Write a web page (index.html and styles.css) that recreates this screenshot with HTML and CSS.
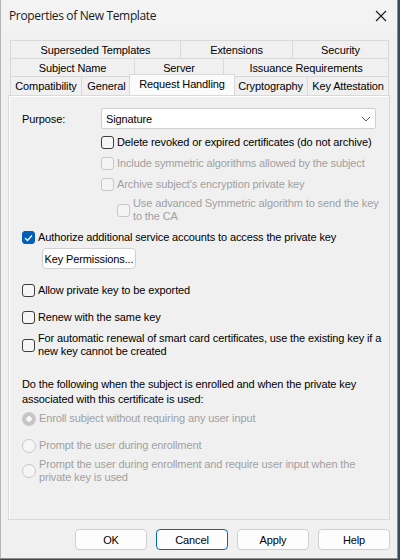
FILE: index.html
```html
<!DOCTYPE html>
<html>
<head>
<meta charset="utf-8">
<link rel="stylesheet" href="styles.css">
</head>
<body>
<div class="window">
  <div class="titlebar">
    <span class="title">Properties of New Template</span>
    <svg class="close" width="12" height="12" viewBox="0 0 12 12"><path d="M1 1 L11 11 M11 1 L1 11" stroke="#1a1a1a" stroke-width="1.1" fill="none"/></svg>
  </div>
  <div class="content">
    <div class="tabs">
      <div class="tabrow row1">
        <div class="tab">Superseded Templates</div>
        <div class="tab">Extensions</div>
        <div class="tab">Security</div>
      </div>
      <div class="tabrow row2">
        <div class="tab">Subject Name</div>
        <div class="tab">Server</div>
        <div class="tab">Issuance Requirements</div>
      </div>
      <div class="tabrow row3">
        <div class="tab">Compatibility</div>
        <div class="tab">General</div>
        <div class="tab active">Request Handling</div>
        <div class="tab">Cryptography</div>
        <div class="tab">Key Attestation</div>
      </div>
    </div>
    <div class="panel">
      <div class="purpose">
        <span class="plabel">Purpose:</span>
        <div class="select">
          <span>Signature</span>
          <svg width="10" height="6" viewBox="0 0 10 6"><path d="M1 1 L5 5 L9 1" stroke="#606060" stroke-width="1" fill="none"/></svg>
        </div>
      </div>
      <div class="opts indent">
        <div class="check"><span class="box"></span><span>Delete revoked or expired certificates (do not archive)</span></div>
        <div class="check disabled"><span class="box"></span><span>Include symmetric algorithms allowed by the subject</span></div>
        <div class="check disabled"><span class="box"></span><span>Archive subject's encryption private key</span></div>
        <div class="check disabled multi sub"><span class="box"></span><span>Use advanced Symmetric algorithm to send the key to the CA</span></div>
      </div>
      <div class="check auth"><span class="box checked"><svg width="9" height="8" viewBox="0 0 9 8"><path d="M1 4 L3.5 6.5 L8 1.5" stroke="#fff" stroke-width="1.3" fill="none"/></svg></span><span>Authorize additional service accounts to access the private key</span></div>
      <div class="btnwrap"><button class="btn keyperm">Key Permissions...</button></div>
      <div class="check allow"><span class="box"></span><span>Allow private key to be exported</span></div>
      <div class="check renew"><span class="box"></span><span>Renew with the same key</span></div>
      <div class="check multi auto"><span class="box"></span><span>For automatic renewal of smart card certificates, use the existing key if a new key cannot be created</span></div>
      <p class="desc">Do the following when the subject is enrolled and when the private key associated with this certificate is used:</p>
      <div class="radio disabled r1"><span class="dot selected"></span><span>Enroll subject without requiring any user input</span></div>
      <div class="radio disabled r2"><span class="dot"></span><span>Prompt the user during enrollment</span></div>
      <div class="radio disabled multi r3"><span class="dot"></span><span>Prompt the user during enrollment and require user input when the private key is used</span></div>
    </div>
    <div class="buttons">
      <button class="btn">OK</button>
      <button class="btn focus">Cancel</button>
      <button class="btn">Apply</button>
      <button class="btn">Help</button>
    </div>
  </div>
</div>
</body>
</html>
```
FILE: styles.css
```css
* { box-sizing: border-box; }
html, body { margin: 0; padding: 0; }
body {
  width: 400px;
  height: 560px;
  background: #3a4a5a;
  font-family: "Liberation Sans", Arial, sans-serif;
  font-size: 11px;
  letter-spacing: -0.12px;
  color: #000;
  overflow: hidden;
}
.window {
  width: 398px;
  height: 559px;
  background: #f0f0f0;
  border: 1px solid #8c8c8c;
  border-top: none;
  border-left-color: #b5b5b5;
}
.titlebar {
  height: 31px;
  display: flex;
  align-items: center;
  justify-content: space-between;
  padding: 0 9px 0 8px;
  background: #f3f3f3;
}
.title {
  font-family: "Open Sans", "Noto Sans", sans-serif;
  font-size: 12px;
  letter-spacing: -0.35px;
  color: #1a1a1a;
}
.close { margin-right: 1px; }
.content {
  padding: 9px 7px 0 7px;
}
.tabs {
  padding: 0 1px 0 1px;
}
.tabrow {
  display: grid;
  height: 18px;
}
.row1 { grid-template-columns: 170px 112px 97px; margin-left: 1px; }
.row2 { grid-template-columns: 124px 89px 166px; margin-left: 1px; }
.row3 { grid-template-columns: 71px 50px 102px 74px 82px; margin-left: 1px; height: 19px; }
.tab {
  border: 1px solid #d9d9d9;
  border-bottom: none;
  border-right: none;
  background: #f0f0f0;
  display: flex;
  align-items: center;
  justify-content: center;
  white-space: nowrap;
  color: #000;
}
.tabrow .tab:last-child { border-right: 1px solid #d9d9d9; }
.tab.active {
  background: #fbfbfb;
  margin: -2px -2px 0 -2px;
  border: 1px solid #d9d9d9;
  border-bottom: none;
  position: relative;
  z-index: 1;
  padding-bottom: 3px;
}
.panel {
  height: 425px;
  background: #f0f0f0;
  border: 1px solid #d9d9d9;
  box-shadow: inset 1px 1px 0 #fff;
  padding: 12px 0 0 13px;
}
.purpose {
  display: flex;
  align-items: center;
  height: 21px;
}
.plabel { width: 79px; }
.select {
  width: 275px;
  height: 21px;
  background: #fff;
  border: 1px solid #d0d0d0;
  border-radius: 2px;
  display: flex;
  align-items: center;
  justify-content: space-between;
  padding: 0 4px 0 4px;
}
.indent { padding-left: 79px; margin-top: 7px; }
.check, .radio {
  display: flex;
  align-items: center;
  gap: 3px;
  line-height: 13px;
}
.opts .check { height: 13px; margin-bottom: 8px; }
.opts .check.sub { height: 26px; margin-left: 16px; margin-top: -2px; }
.box {
  flex: 0 0 auto;
  width: 13px;
  height: 13px;
  border: 1px solid #3d3d3d;
  border-radius: 3px;
  background: #f6f6f6;
  display: flex;
  align-items: center;
  justify-content: center;
}
.box.checked {
  background: #005fb8;
  border-color: #005fb8;
}
.disabled { color: #a0a0a0; }
.disabled .box { border-color: #c8c8c8; background: #f4f4f4; }
.auth { margin-top: 3px; height: 13px; }
.btnwrap { padding-left: 20px; margin-top: 4px; }
.btn {
  font-family: "Liberation Sans", Arial, sans-serif;
  font-size: 11px;
  letter-spacing: -0.12px;
  height: 21px;
  background: #fdfdfd;
  border: 1px solid #d0d0d0;
  border-radius: 4px;
  color: #000;
  padding: 0;
}
.keyperm { width: 94px; }
.allow { margin-top: 15px; height: 13px; }
.renew { margin-top: 14px; height: 13px; }
.auto { margin-top: 8px; }
.desc { margin: 19px 0 0 0; line-height: 15px; width: 350px; }
.r1 { margin-top: 4px; height: 15px; }
.r2 { margin-top: 12px; height: 15px; }
.r3 { margin-top: 5px; }
.dot {
  flex: 0 0 auto;
  width: 14px;
  height: 14px;
  border-radius: 50%;
  border: 1px solid #c8c8c8;
  background: #f6f6f6;
}
.dot.selected {
  background: radial-gradient(circle, #f6f6f6 0 2.5px, #c5c5c5 3px);
  border-color: #c5c5c5;
}
.buttons {
  display: flex;
  justify-content: flex-end;
  gap: 9px;
  padding: 9px 0 0 0;
}
.buttons .btn { width: 72px; }
.btn.focus { border-color: #0067c0; }
```
